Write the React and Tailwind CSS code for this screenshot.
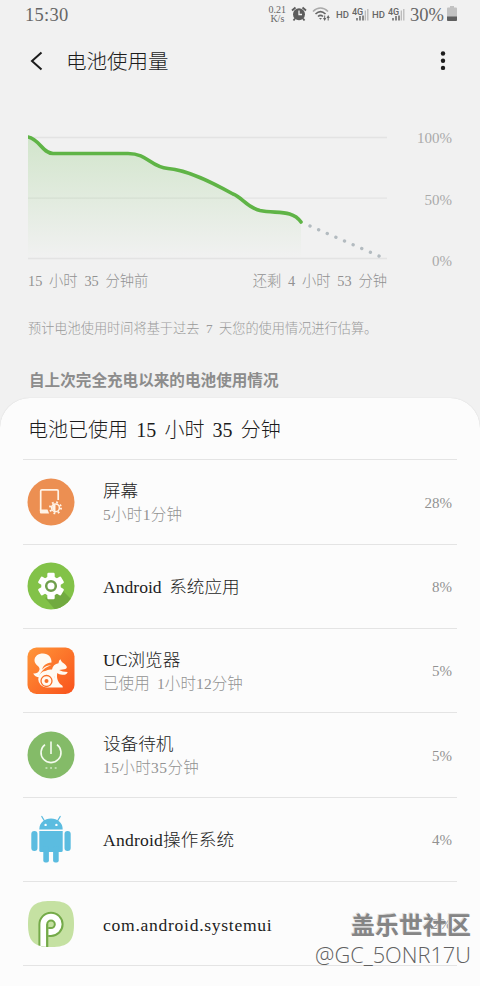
const APPS = [
    { name: '屏幕', detail: '5小时1分钟', percent: '28%', Icon: ScreenIcon, detailClass: 'tracking-[0.3px]' },
    { name: 'Android 系统应用', percent: '8%', Icon: GearIcon },
    { name: 'UC浏览器', detail: '已使用 1小时12分钟', percent: '5%', Icon: SquirrelIcon, detailClass: 'tracking-[0.1px]' },
    { name: '设备待机', detail: '15小时35分钟', percent: '5%', Icon: PowerIcon, detailClass: 'tracking-[0.4px]' },
    { name: 'Android操作系统', percent: '4%', Icon: RobotIcon, nameClass: 'tracking-[0.2px]' },
    { name: 'com.android.systemui', percent: '2%', Icon: PieIcon, nameClass: 'tracking-[0.7px]' },
];

function ScreenIcon() {
    return (
        <svg viewBox="0 0 48 48" className="size-12">
            <circle cx="24" cy="24" r="23.5" fill="#ec8f52" />
            <path d="M31.2 22V13a1.200 1.200 0 0 0-1.200-1.200H14.900a1.200 1.200 0 0 0-1.200 1.200v20" fill="none" stroke="#fff3e6" strokeWidth="1.700" />
            <path d="M12.900 31.600h7.600l1.600 3.900h-8.200a1 1 0 0 1-1-1z" fill="#fff3e6" />
            <circle cx="28.500" cy="29.800" r="5.500" fill="none" stroke="#fff3e6" strokeWidth="2" strokeDasharray="1.800 2.520" />
            <circle cx="28.500" cy="29.800" r="3.900" fill="none" stroke="#fff3e6" strokeWidth="1.500" />
            <path d="M28.500 26.500a3.300 3.300 0 0 0 0 6.600z" fill="#fff3e6" />
        </svg>
    );
}

function GearIcon() {
    return (
        <svg viewBox="0 0 48 48" className="size-12">
            <defs>
                <clipPath id="gear-clip">
                    <circle cx="24" cy="24" r="23.5" />
                </clipPath>
            </defs>
            <circle cx="24" cy="24" r="23.5" fill="#82c248" />
            <path d="M35 28 56 49v10H38L18 36z" fill="#71aa40" clipPath="url(#gear-clip)" />
            <g fill="#fff">
                <circle cx="24" cy="24" r="9.800" />
                <rect x="20.300" y="10.800" width="7.400" height="26.400" rx="1.200" />
                <rect x="20.300" y="10.800" width="7.400" height="26.400" rx="1.200" transform="rotate(60 24 24)" />
                <rect x="20.300" y="10.800" width="7.400" height="26.400" rx="1.200" transform="rotate(120 24 24)" />
            </g>
            <circle cx="24" cy="24" r="4.800" fill="#fff" stroke="#6f9f4c" strokeWidth="2.500" />
        </svg>
    );
}

function SquirrelIcon() {
    return (
        <svg viewBox="0 0 48 48" className="size-12">
            <defs>
                <linearGradient id="uc" x1="0" y1="0" x2="1" y2="1">
                    <stop offset="0" stopColor="#ff9638" />
                    <stop offset="1" stopColor="#f9521c" />
                </linearGradient>
            </defs>
            <rect x="0.500" y="0.500" width="47" height="46.500" rx="9" fill="url(#uc)" />
            {/* tail */}
            <path
                d="M7.500 13.500C7.500 9 11.200 6.400 16 6.400c5.300 0 8.900 3.800 8.500 9.100-5.500.5-8.500 3-9.300 7 2.500-3 5.500-4.300 9-4.200-5.500 2-10.500 5-12.200 12-2.500-.2-4.800-1.500-5.800-3.800 3.300.3 5.800-1.200 6.300-4 .7-3.500-5-4.500-5-9z"
                fill="#fffaf2"
            />
            {/* head, arms and foot */}
            <path
                d="M33.500 12.200c.3 1.500 1.200 2.800 2.800 3.700 1.900 1.200 3.200 2.600 3.500 4.100.2 1.300-.9 2-2.600 2.200l-5 .8c2.200 1.300 4.600 1.900 8.500 1.900-.6 2.200-2.800 3-5.500 2.800-2-.1-3.500-.7-4.900-1.700-.8 3.500-.2 8.500 3.700 11.800 1.300.5 1.800 1.200 1.800 2.600H19.500a8.300 8.300 0 1 1 8.300-9c-.3-3.500-2.800-6-6.800-6.400l-4 .6c1.800-2.200 4.800-3.400 8-3 .5-3.700 2.900-5.600 6.500-6.400.2-1.300.6-3.200 2-4z"
                fill="#fffaf2"
            />
            <circle cx="19.500" cy="34" r="5.500" fill="none" stroke="#f97028" strokeWidth="1.300" />
            <circle cx="19.500" cy="34" r="2" fill="#f97028" />
        </svg>
    );
}

function PowerIcon() {
    return (
        <svg viewBox="0 0 48 48" className="size-12">
            <circle cx="24" cy="24" r="23.5" fill="#84bb68" />
            <path d="M18 13.600a10 10 0 1 0 12 0M24 10.500v12.500" fill="none" stroke="#f4fbef" strokeWidth="1.600" />
            <path d="M18.500 37h1.900M23.100 37h1.900M27.700 37h1.900" stroke="#f4fbef" strokeWidth="1.200" />
        </svg>
    );
}

function RobotIcon() {
    return (
        <svg viewBox="0 0 48 48" className="size-12">
            <g fill="#5bbce0">
                <path d="M12.300 14.400C12.300 7.800 17.500 3.600 24 3.600s11.700 4.200 11.700 10.800z" />
                <path d="M12.300 16h23.400v19.500a1.500 1.500 0 0 1-1.500 1.500H13.800a1.500 1.500 0 0 1-1.500-1.500z" />
                <rect x="4.300" y="16" width="6.200" height="20" rx="3" />
                <rect x="37.500" y="16" width="6.200" height="20" rx="3" />
                <rect x="16.300" y="31" width="5.600" height="16.500" rx="2" />
                <rect x="26.100" y="31" width="5.600" height="16.500" rx="2" />
            </g>
            <path d="m14.800 1.500 3 5M33.200 1.500l-3 5" stroke="#5bbce0" strokeWidth="1.300" strokeLinecap="round" />
            <circle cx="18.600" cy="9.900" r="1.200" fill="#fff" />
            <circle cx="29.400" cy="9.900" r="1.200" fill="#fff" />
        </svg>
    );
}

function PieIcon() {
    return (
        <svg viewBox="0 0 48 48" className="size-12">
            <defs>
                <clipPath id="pie-clip">
                    <path d="M24 1C41.500 1 47 6.500 47 24s-5.500 23-23 23S1 41.500 1 24 6.500 1 24 1z" />
                </clipPath>
            </defs>
            <g clipPath="url(#pie-clip)">
                <rect width="48" height="48" fill="#c5e1a2" />
                <path d="M16.300 50V24.300a7.700 7.700 0 1 1 7.700 7.700h-2.600" fill="none" stroke="#74aa49" strokeWidth="9.800" />
                <path d="M16.300 50V24.300a7.700 7.700 0 1 1 7.700 7.700h-2.600" fill="none" stroke="#fff" strokeWidth="5.800" />
                <path d="M20.200 48V24.300" fill="none" stroke="#74aa49" strokeWidth="1.800" />
            </g>
        </svg>
    );
}

function SignalIcon() {
    return (
        <div className="flex items-center">
            <span className="mr-[3px] -mt-px w-[13px] font-['Roboto'] text-[9.500px] leading-none font-medium">HD</span>
            <svg viewBox="0 0 17 16" className="-mt-[3px] h-4 w-[17px]">
                <text x="0" y="8.500" fontSize="9" fontWeight="500" fontFamily="Roboto" fill="#666">4G</text>
                <path d="M5 14.500v-2.500M8 14.500V10M11 14.500V9.500" stroke="#666" strokeWidth="1.500" />
                <path d="M13.300 14.500V4.500M15.800 14.500V3" stroke="#b5b5b5" strokeWidth="1.200" />
            </svg>
        </div>
    );
}

function StatusBar() {
    return (
        <div className="flex h-[30px] items-center pr-[23px] pl-[25px] text-[#666]">
            <span className="text-[18.500px] leading-none tracking-[0.300px]">15:30</span>
            <div className="ml-auto flex items-center">
                <div className="mr-[5px] -mt-[2px] text-center text-[10px] leading-[9px]">
                    <div>0.21</div>
                    <div>K/s</div>
                </div>
                <svg viewBox="0 0 16 16" className="mr-[5px] -mt-[3px] size-4">
                    <path d="m1 4.500 3.500-3M15 4.500l-3.500-3M4 12.500l-1.500 2M12 12.500l1.500 2" stroke="#5c5c5c" strokeWidth="1.800" />
                    <circle cx="8" cy="8.200" r="6" fill="#5c5c5c" />
                    <path d="M8 4.500v4h3" fill="none" stroke="#f1f1f1" strokeWidth="1.300" />
                </svg>
                <svg viewBox="0 0 19 16" className="mr-[5px] -mt-[3px] h-4 w-[19px]">
                    <path d="M1 5.500c4.500-4.700 10.500-4.700 15 0" fill="none" stroke="#aaa" strokeWidth="1.600" />
                    <path d="M3.500 8c3.200-3 6.800-3 10 0M6 10.500c1.700-1.500 3.300-1.500 5 0" fill="none" stroke="#666" strokeWidth="1.600" />
                    <path d="m7 12 1.500 1.800L10 12zM11 12l1.700 3 1.600-3zM14.500 12l1.700-3 1.600 3z" fill="#666" />
                    <path d="M12.700 9.500V13M16.200 11v3.500" stroke="#666" />
                </svg>
                <SignalIcon />
                <div className="w-[3px]" />
                <SignalIcon />
                <span className="mr-[3px] ml-[5px] text-[18.500px] leading-none">30%</span>
                <svg viewBox="0 0 10 15" className="-mt-[3px] h-[15px] w-[10px]">
                    <path d="M3 0h4v1.500h2a1 1 0 0 1 1 1V14a1 1 0 0 1-1 1H1a1 1 0 0 1-1-1V2.500a1 1 0 0 1 1-1h2z" fill="#c2c2c2" />
                    <path d="M0 10.500h10V14a1 1 0 0 1-1 1H1a1 1 0 0 1-1-1z" fill="#5f5f5f" />
                </svg>
            </div>
        </div>
    );
}

function BatteryChart() {
    const line =
        'M0 7C12 9.500 14 23 25 23.500H100C120 23.500 122 37 140 38.500C160 40 185 53 205 64C214 67 218 77 232 80.500C248 84 264 79 273 92';
    return (
        <svg viewBox="0 0 360 136" className="h-[136px] w-[360px] shrink-0">
            <defs>
                <linearGradient id="usage" x1="0" y1="0" x2="0" y2="1">
                    <stop offset="0" stopColor="#62ba46" stopOpacity="0.220" />
                    <stop offset="1" stopColor="#62ba46" stopOpacity="0" />
                </linearGradient>
                <clipPath id="plot">
                    <rect x="0" y="0" width="276" height="136" />
                </clipPath>
            </defs>
            <path d="M0 7.500h359M0 68.200h359M0 128.500h359" stroke="#e3e3e3" strokeWidth="1.300" />
            <path d={`${line}V128H0z`} fill="url(#usage)" />
            <path d={line} fill="none" stroke="#5fb446" strokeWidth="3.600" strokeLinecap="round" clipPath="url(#plot)" />
            <path d="M282 96 352 126.500" stroke="#b3bbc0" strokeWidth="3.400" strokeLinecap="round" strokeDasharray="0.010 9.400" />
        </svg>
    );
}

function AppRow({ app }) {
    const { name, detail, percent, Icon, nameClass = '', detailClass = '' } = app;
    return (
        <li className="mx-[23px] flex h-[84.330px] items-center border-b border-[#e4e4e4] pr-[5px] pl-[4px]">
            <Icon />
            <div className="ml-7 flex-1 pt-[2px]">
                <div className={`text-[17.600px] leading-6 text-[#1c1c1c] ${nameClass}`}>{name}</div>
                {detail && <div className={`text-[15.500px] leading-6 text-[#929292] ${detailClass}`}>{detail}</div>}
            </div>
            <span className="pt-[2px] text-[15px] text-[#929292]">{percent}</span>
        </li>
    );
}

export default function App() {
    return (
        <div className="relative flex h-[986px] w-[480px] flex-col overflow-hidden bg-[#f1f1f1] font-['Liberation_Serif','Noto_Sans_CJK_SC',serif] font-light [word-spacing:0.2em] whitespace-nowrap">
            <StatusBar />
            <header className="flex h-[62px] items-center pr-[34px] pl-[30px] text-[#1c1c1c]">
                <svg viewBox="0 0 13 20" className="h-5 w-[13px]">
                    <path d="M11.500 1.500 2 10l9.500 8.500" fill="none" stroke="currentColor" strokeWidth="2" />
                </svg>
                <h1 className="mt-[2px] ml-[23px] text-[20.500px] leading-none">电池使用量</h1>
                <svg viewBox="0 0 6 20" className="ml-auto h-5 w-[6px]" fill="currentColor">
                    <circle cx="3" cy="2.500" r="2.200" />
                    <circle cx="3" cy="9.700" r="2.200" />
                    <circle cx="3" cy="16.900" r="2.200" />
                </svg>
            </header>

            <section className="mt-[38px] pl-7">
                <div className="flex">
                    <BatteryChart />
                    <div className="flex h-[139px] w-16 flex-col justify-between text-right text-[15px] leading-4 text-[#aaa]">
                        <span>100%</span>
                        <span>50%</span>
                        <span>0%</span>
                    </div>
                </div>
                <div className="mt-[2px] flex w-[359px] justify-between text-[14.300px] leading-5 text-[#929292]">
                    <span>15 小时 35 分钟前</span>
                    <span>还剩 4 小时 53 分钟</span>
                </div>
                <p className="mt-[28px] text-[13.200px] leading-5 text-[#9a9a9a]">
                    预计电池使用时间将基于过去 7 天您的使用情况进行估算。
                </p>
                <h2 className="mt-8 pl-px text-[15.600px] leading-5 font-bold text-[#8c8c8c]">自上次完全充电以来的电池使用情况</h2>
            </section>

            <main className="mt-[7px] flex-1 rounded-t-[30px] bg-[#fcfcfc] shadow-[0_0_1px_#c8c8c8]">
                <div className="mx-[23px] flex h-[62.400px] items-center border-b border-[#e4e4e4] pt-[3px] pl-[5px] text-[20px] text-[#1c1c1c]">
                    电池已使用 15 小时 35 分钟
                </div>
                <ul>
                    {APPS.map((app) => (
                        <AppRow key={app.name} app={app} />
                    ))}
                </ul>
            </main>

            <div className="absolute right-[9px] bottom-[17px] text-right font-['Open_Sans','Noto_Sans_CJK_SC',sans-serif] font-normal text-[#858585]">
                <div className="text-[24px] leading-[30px] font-bold [text-shadow:-1px_-1px_0_#dedede]">盖乐世社区</div>
                <div className="text-[21.800px] leading-[29px] font-light text-[#606060]">@GC_5ONR17U</div>
            </div>
        </div>
    );
}
